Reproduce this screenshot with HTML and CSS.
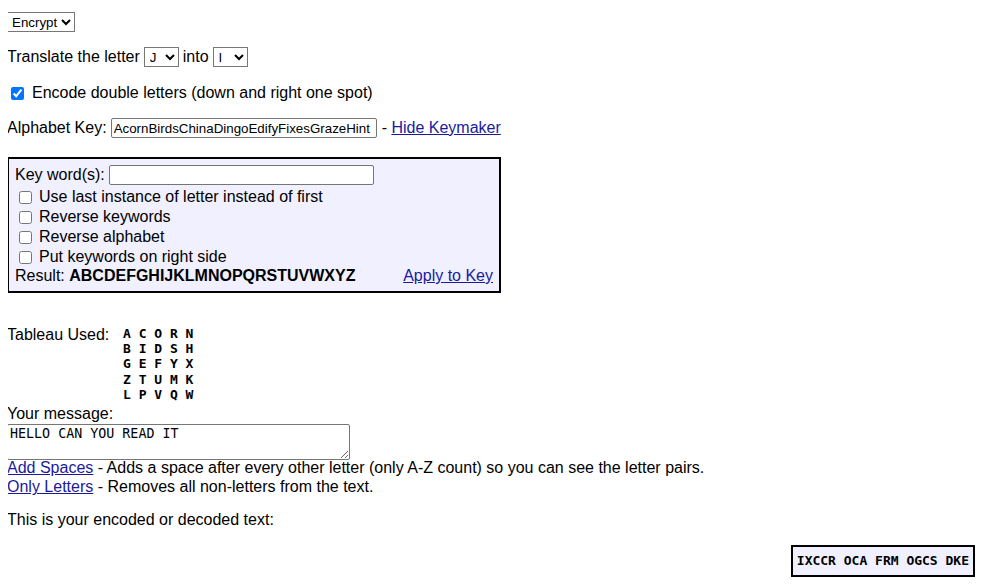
FILE: index.html
```html
<!DOCTYPE html>
<html>
<head>
<meta charset="utf-8">
<link rel="stylesheet" href="styles.css">
</head>
<body>
<div class="row r1">
  <select class="sel sel-mode"><option>Encrypt</option><option>Decrypt</option></select>
</div>
<div class="row r2">
  <span>Translate the letter</span>
  <select class="sel sel-letter"><option>J</option></select>
  <span>into</span>
  <select class="sel sel-letter"><option>I</option></select>
</div>
<div class="row r3">
  <label class="chk"><input type="checkbox" checked> Encode double letters (down and right one spot)</label>
</div>
<div class="row r4">
  <span>Alphabet Key:</span>
  <input class="txt key-input" type="text" value="AcornBirdsChinaDingoEdifyFixesGrazeHint">
  <span>- <a href="#">Hide Keymaker</a></span>
</div>
<div class="keymaker">
  <div class="km-row km-key">
    <span>Key word(s):</span>
    <input class="txt kw-input" type="text">
  </div>
  <label class="km-row km-chk"><input type="checkbox"> Use last instance of letter instead of first</label>
  <label class="km-row km-chk"><input type="checkbox"> Reverse keywords</label>
  <label class="km-row km-chk"><input type="checkbox"> Reverse alphabet</label>
  <label class="km-row km-chk"><input type="checkbox"> Put keywords on right side</label>
  <div class="km-result">
    <span>Result: <b>ABCDEFGHIJKLMNOPQRSTUVWXYZ</b></span>
    <a href="#">Apply to Key</a>
  </div>
</div>
<div class="tableau">
  <span class="tab-label">Tableau Used:</span>
  <div class="tab-grid">A C O R N<br>B I D S H<br>G E F Y X<br>Z T U M K<br>L P V Q W</div>
</div>
<div class="msg-label">Your message:</div>
<textarea class="msg" rows="2">HELLO CAN YOU READ IT</textarea>
<div class="help help-first"><a href="#">Add Spaces</a> - Adds a space after every other letter (only A-Z count) so you can see the letter pairs.</div>
<div class="help"><a href="#">Only Letters</a> - Removes all non-letters from the text.</div>
<div class="out-label">This is your encoded or decoded text:</div>
<div class="out-wrap">
  <div class="output">IXCCR OCA FRM OGCS DKE</div>
</div>
</body>
</html>
```
FILE: styles.css
```css
html, body {
  background: #fff;
}
body {
  margin: 8px;
  font-family: "Liberation Sans", Arial, sans-serif;
  font-size: 16px;
  line-height: 18.4px;
  color: #000;
}
a {
  color: #1a1a9e;
  text-decoration: underline;
}
.row {
  display: flex;
  align-items: center;
  height: 20px;
  white-space: nowrap;
}
.r1 { margin-top: 4px; margin-left: -1px; }
.r2 { margin-top: 15px; margin-left: -1px; }
.r3 { margin-top: 16px; }
.r4 { margin-top: 15px; margin-left: -1px; }
.r2 span + .sel-letter { margin-left: 4px; }
.r2 .sel-letter { margin-right: 4px; }

.sel {
  font-family: "Liberation Sans", Arial, sans-serif;
  font-size: 13.33px;
  height: 20px;
  border: 1px solid #767676;
  border-radius: 0;
  background: #fff;
  color: #000;
  padding: 0 0 0 1px;
  margin: 0;
}
.sel-mode { width: 68px; padding-left: 0; }
.sel-letter { width: 35px; }

.chk {
  display: flex;
  align-items: center;
}
.chk input, .km-chk input {
  width: 13px;
  height: 13px;
  margin: 0 7px 0 4px;
}
.chk input { margin-left: 3px; margin-right: 8px; }

.txt {
  font-family: "Liberation Sans", Arial, sans-serif;
  font-size: 13.33px;
  height: 20px;
  box-sizing: border-box;
  border: 1px solid #767676;
  border-radius: 2px;
  padding: 1px 2px;
  margin: 0;
  background: #fff;
}
.key-input { width: 266px; margin: 0 5px 0 4px; }

.keymaker {
  margin-top: 19px;
  margin-left: -1px;
  width: 494px;
  height: 136px;
  box-sizing: border-box;
  border: 2px solid #000;
  background: #f0f0ff;
  padding: 6px 6px 0 6px;
  white-space: nowrap;
}
.km-row {
  display: flex;
  align-items: center;
  height: 20px;
}
.km-key { margin-bottom: 2px; }
.kw-input { width: 265px; margin-left: 4px; }
.km-result {
  display: flex;
  justify-content: space-between;
  align-items: flex-start;
  height: 18px;
}
.km-result b {
  font-weight: bold;
}

.tableau {
  display: flex;
  align-items: flex-start;
  margin-top: 33px;
  margin-left: -1px;
}
.tab-label {
  width: 116px;
}
.tab-grid {
  font-family: "DejaVu Sans Mono", "Liberation Mono", monospace;
  font-weight: bold;
  font-size: 13px;
  line-height: 15.2px;
  white-space: pre;
}
.msg-label {
  margin-top: 3px;
  margin-left: -1px;
}
.msg {
  display: block;
  margin: 1px 0 0 -1px;
  width: 343px;
  height: 36px;
  box-sizing: border-box;
  font-family: "DejaVu Sans Mono", "Liberation Mono", monospace;
  font-size: 13.33px;
  line-height: 15px;
  padding: 1px 2px;
  border: 1px solid #767676;
  border-radius: 2px;
  resize: vertical;
}
.help {
  margin-left: -1px;
  height: 19px;
  white-space: nowrap;
}
.help-first { margin-top: -1px; }
.out-label {
  margin-top: 14px;
  margin-left: -1px;
}
.out-wrap {
  display: flex;
  justify-content: flex-end;
  margin-top: 15px;
  padding-right: 19px;
}
.output {
  border: 2px solid #000;
  background: #f0f0ff;
  font-family: "DejaVu Sans Mono", "Liberation Mono", monospace;
  font-weight: bold;
  font-size: 13px;
  line-height: 15px;
  padding: 6px 4px 7px 4px;
  white-space: pre;
}
```
